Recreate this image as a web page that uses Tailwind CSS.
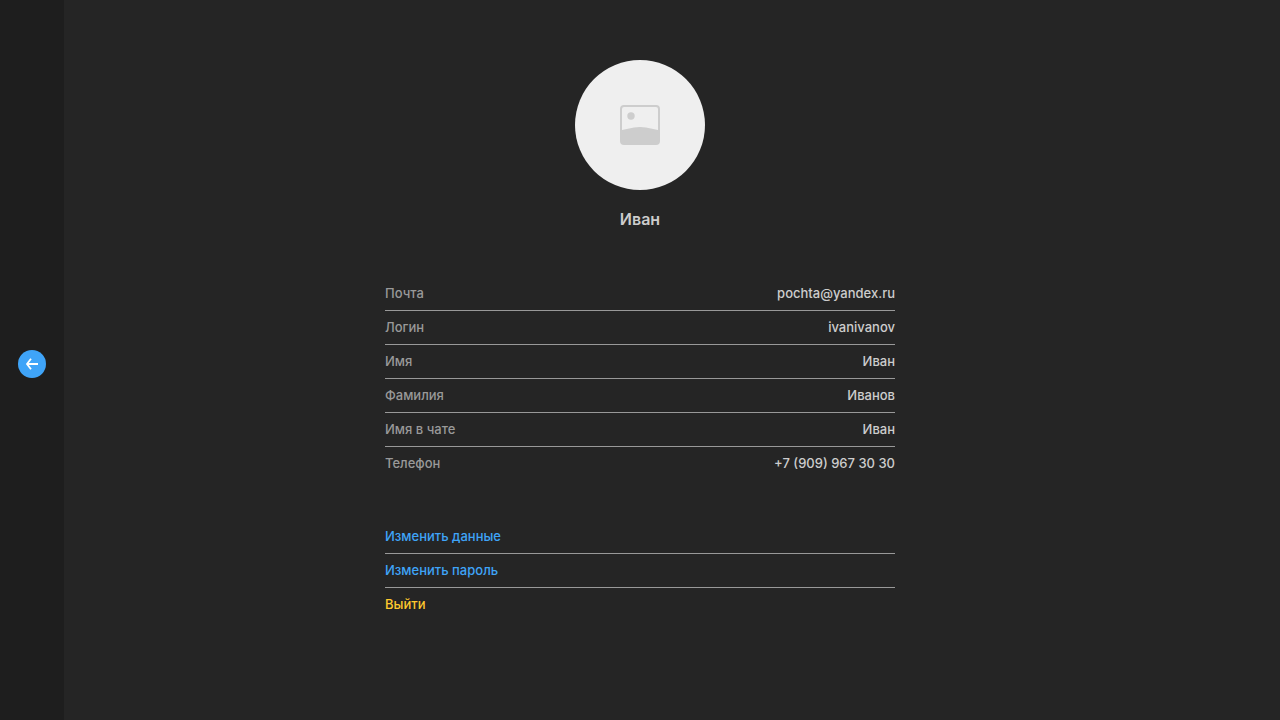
<!DOCTYPE html>
<html lang="ru">
<head>
<meta charset="utf-8">
<meta name="viewport" content="width=device-width, initial-scale=1">
<title>Профиль</title>
<script src="https://cdn.jsdelivr.net/npm/@tailwindcss/browser@4"></script>
</head>
<body class="flex min-h-screen bg-[#252525] font-['Inter',sans-serif] text-[13px] leading-4 font-medium text-[#cdcdcd] antialiased">
  <nav class="flex w-16 shrink-0 items-center justify-center bg-[#1e1e1e] pt-2" aria-label="Навигация">
    <button type="button" aria-label="Назад" class="flex size-7 items-center justify-center rounded-full bg-[#3fa4f8] text-white">
      <svg class="size-7" viewBox="0 0 28 28" fill="none" stroke="currentColor" stroke-width="1.8"><path d="M20 14H9M13 8.800L9 14l4 5.200"/></svg>
    </button>
  </nav>
  <main class="flex grow flex-col items-center pt-15 pr-16 pb-20">
    <button type="button" aria-label="Аватар" class="flex size-[130px] items-center justify-center rounded-full bg-[#efefef]">
      <svg class="size-10" viewBox="0 0 40 40" fill="#cdcdcd"><path fill-rule="evenodd" d="M4 0h32a4 4 0 0 1 4 4v32a4 4 0 0 1-4 4H4a4 4 0 0 1-4-4V4a4 4 0 0 1 4-4Zm0 2a2 2 0 0 0-2 2v21.100l12-2.500a29 29 0 0 1 12 0L38 25.100V4a2 2 0 0 0-2-2Z"/><circle cx="11" cy="11" r="3.700"/></svg>
    </button>
    <h1 class="mt-[19px] text-base leading-5 font-semibold">Иван</h1>
    <dl class="mt-12 w-full max-w-[510px] divide-y divide-[#999999]">
      <div class="flex justify-between pt-2 pb-[9px]"><dt class="text-[#999999]">Почта</dt><dd>pochta@yandex.ru</dd></div>
      <div class="flex justify-between pt-2 pb-[9px]"><dt class="text-[#999999]">Логин</dt><dd>ivanivanov</dd></div>
      <div class="flex justify-between pt-2 pb-[9px]"><dt class="text-[#999999]">Имя</dt><dd>Иван</dd></div>
      <div class="flex justify-between pt-2 pb-[9px]"><dt class="text-[#999999]">Фамилия</dt><dd>Иванов</dd></div>
      <div class="flex justify-between pt-2 pb-[9px]"><dt class="text-[#999999]">Имя в чате</dt><dd>Иван</dd></div>
      <div class="flex justify-between pt-2 pb-[9px]"><dt class="text-[#999999]">Телефон</dt><dd>+7 (909) 967 30 30</dd></div>
    </dl>
    <ul class="mt-10 w-full max-w-[510px] divide-y divide-[#999999]">
      <li class="flex pt-2 pb-[9px]"><a href="#edit" class="text-[#3fa4f8]">Изменить данные</a></li>
      <li class="flex pt-2 pb-[9px]"><a href="#password" class="text-[#3fa4f8]">Изменить пароль</a></li>
      <li class="flex pt-2 pb-[9px]"><a href="#logout" class="text-[#ffc92e]">Выйти</a></li>
    </ul>
  </main>
</body>
</html>
